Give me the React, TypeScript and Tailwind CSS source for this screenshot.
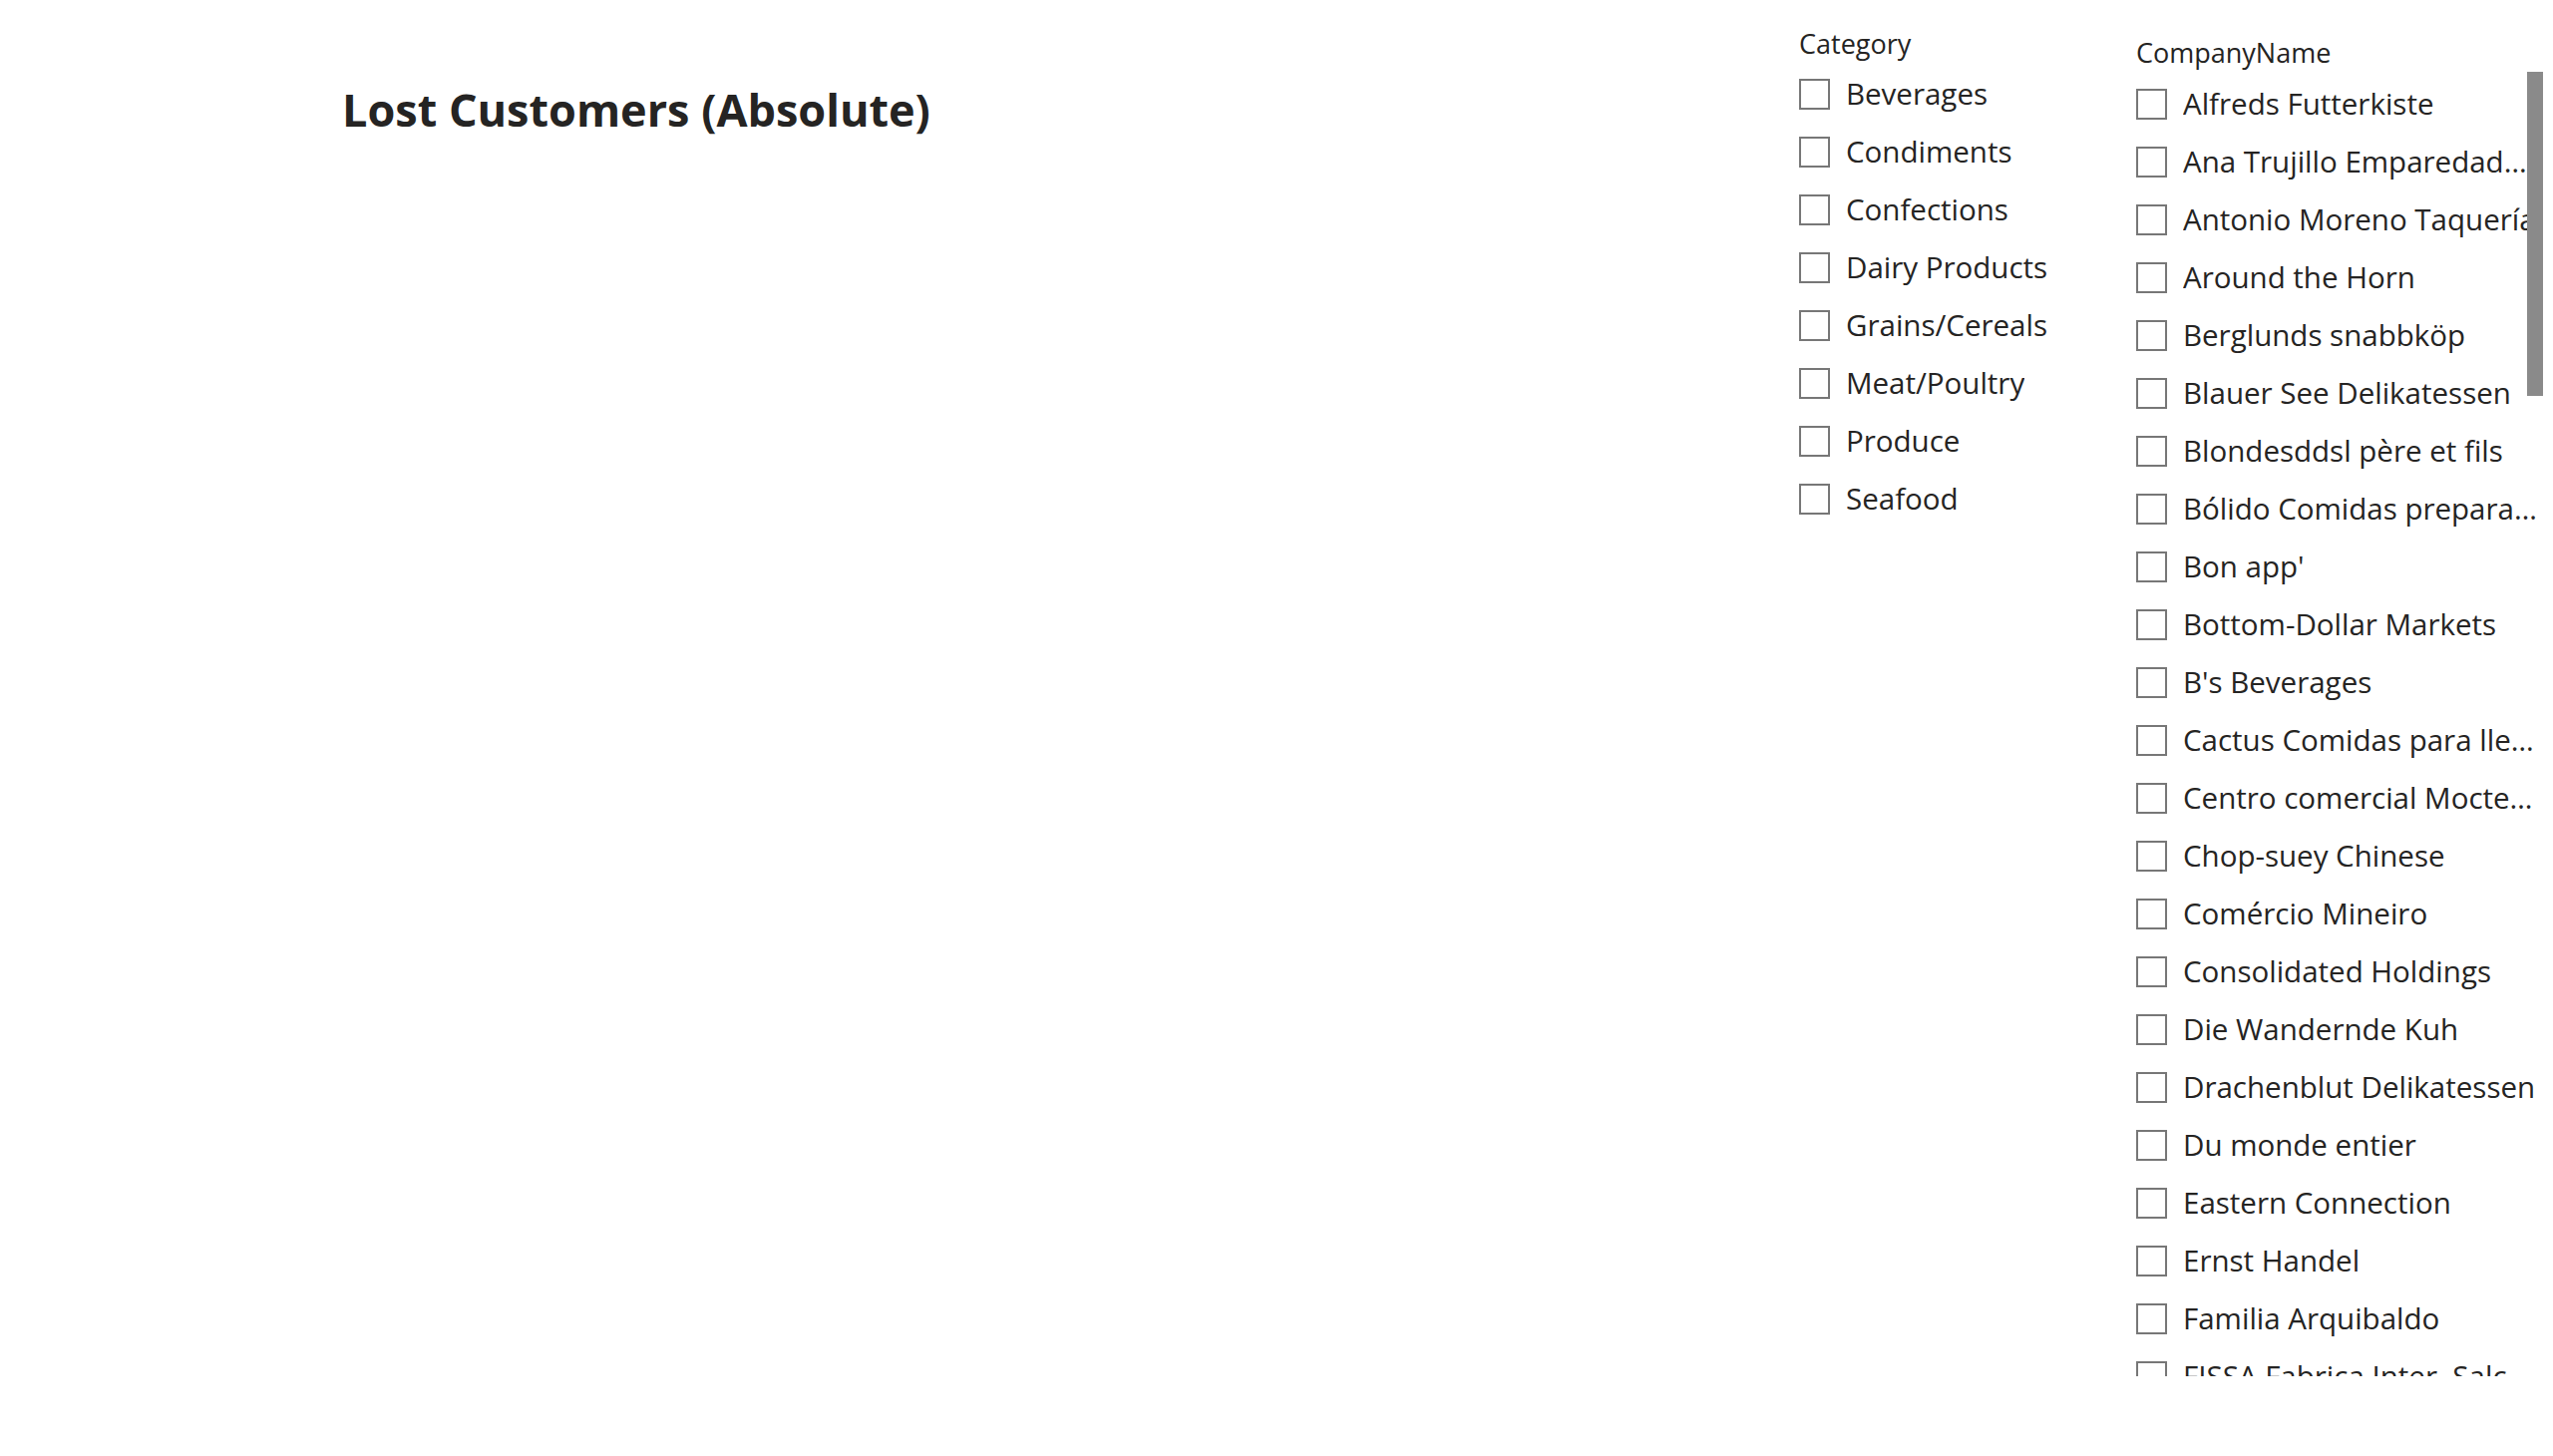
import React from "react";

const categories = [
  "Beverages",
  "Condiments",
  "Confections",
  "Dairy Products",
  "Grains/Cereals",
  "Meat/Poultry",
  "Produce",
  "Seafood",
];

const companies = [
  "Alfreds Futterkiste",
  "Ana Trujillo Emparedados y helados",
  "Antonio Moreno Taquería",
  "Around the Horn",
  "Berglunds snabbköp",
  "Blauer See Delikatessen",
  "Blondesddsl père et fils",
  "Bólido Comidas preparadas",
  "Bon app'",
  "Bottom-Dollar Markets",
  "B's Beverages",
  "Cactus Comidas para llevar",
  "Centro comercial Moctezuma",
  "Chop-suey Chinese",
  "Comércio Mineiro",
  "Consolidated Holdings",
  "Die Wandernde Kuh",
  "Drachenblut Delikatessen",
  "Du monde entier",
  "Eastern Connection",
  "Ernst Handel",
  "Familia Arquibaldo",
  "FISSA Fabrica Inter. Salchichas S.A.",
  "Folies gourmandes",
  "Folk och fä HB",
];

function SlicerItem({ label }: { label: string }) {
  return (
    <div className="flex items-center h-[58px] gap-[16px] min-w-0">
      <span className="shrink-0 w-[31px] h-[31px] border-2 border-[#777777] bg-white" />
      <span className="truncate text-[29.5px] leading-[40px] text-[#252423]">
        {label}
      </span>
    </div>
  );
}

export default function App() {
  return (
    <div
      className="w-[2560px] h-[1460px] bg-white flex overflow-hidden"
      style={{ fontFamily: '"Open Sans", "Noto Sans", sans-serif' }}
    >
      {/* report title */}
      <div className="w-[1804px] shrink-0 pl-[343px] pt-[87px]">
        <h1 className="text-[45px] leading-[46px] font-bold text-[#252423]">
          Lost Customers (Absolute)
        </h1>
      </div>

      {/* Category slicer */}
      <div className="w-[338px] shrink-0 pt-[26px]">
        <div className="h-[36px] leading-[36px] text-[27px] text-[#252423]">
          Category
        </div>
        <div className="mt-[3px]">
          {categories.map((c) => (
            <SlicerItem key={c} label={c} />
          ))}
        </div>
      </div>

      {/* CompanyName slicer */}
      <div className="w-[410px] shrink-0 pt-[35px] relative">
        <div className="h-[36px] leading-[36px] text-[27px] text-[#252423]">
          CompanyName
        </div>
        <div className="mt-[4px] h-[1305px] w-[406px] overflow-hidden">
          {companies.map((c) => (
            <SlicerItem key={c} label={c} />
          ))}
        </div>
        <div className="absolute left-[392px] top-[72px] w-[16px] h-[325px] bg-[#8a8a8a]" />
      </div>
    </div>
  );
}
